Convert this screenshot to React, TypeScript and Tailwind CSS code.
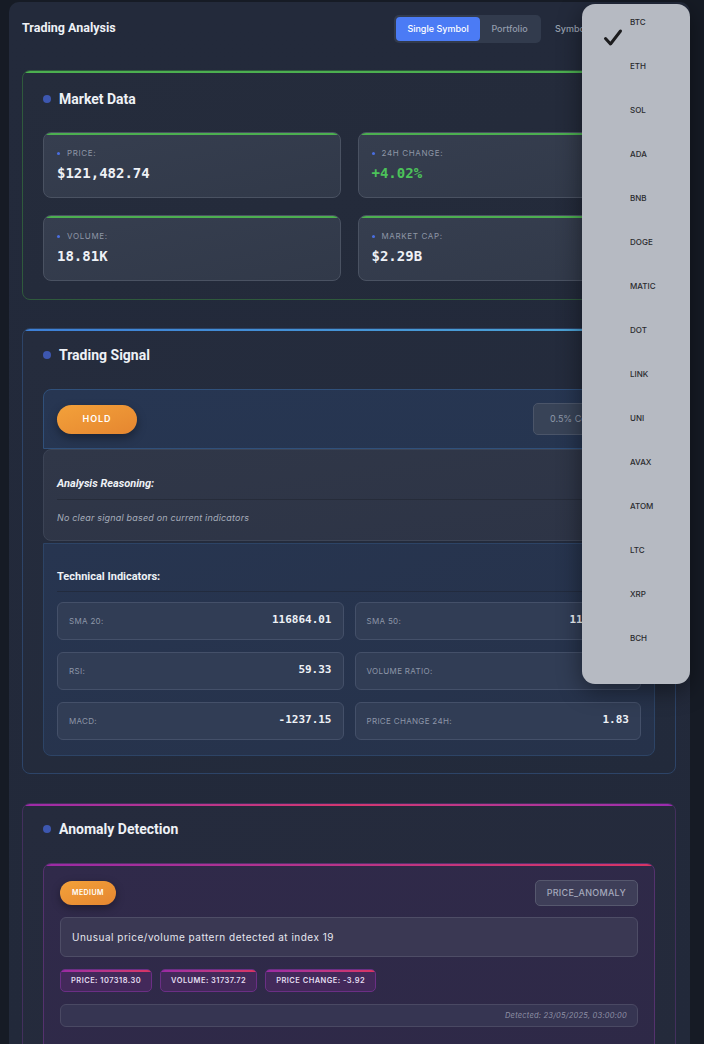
import React from 'react';

const symbols = ['BTC', 'ETH', 'SOL', 'ADA', 'BNB', 'DOGE', 'MATIC', 'DOT', 'LINK', 'UNI', 'AVAX', 'ATOM', 'LTC', 'XRP', 'BCH'];

const marketData = [
  { label: 'Price:', value: '$121,482.74', tone: 'text-[#eef1f6]' },
  { label: '24h Change:', value: '+4.02%', tone: 'text-[#4cc35a]' },
  { label: 'Volume:', value: '18.81K', tone: 'text-[#eef1f6]' },
  { label: 'Market Cap:', value: '$2.29B', tone: 'text-[#eef1f6]' },
];

const indicators = [
  { label: 'SMA 20:', value: '116864.01' },
  { label: 'SMA 50:', value: '114203.57' },
  { label: 'RSI:', value: '59.33' },
  { label: 'Volume Ratio:', value: '1.12' },
  { label: 'MACD:', value: '-1237.15' },
  { label: 'Price Change 24h:', value: '1.83' },
];

const chips = ['Price: 107318.30', 'Volume: 31737.72', 'Price Change: -3.92'];

const SectionTitle: React.FC<{ title: string }> = ({ title }) => (
  <div className="flex items-center gap-[8px] h-[16px]">
    <span className="w-[8px] h-[8px] rounded-full bg-[#3d57b0]" />
    <h3 className="font-['Roboto'] font-bold text-[14px] text-[#eef1f6]">{title}</h3>
  </div>
);

const StatCard: React.FC<{ label: string; value: string; tone: string }> = ({ label, value, tone }) => (
  <div className="relative overflow-hidden h-[66px] rounded-[8px] border border-[#4a5262] bg-gradient-to-br from-[#363e4f] to-[#313949] px-[13px] pt-[13px]">
    <div className="absolute top-0 left-0 right-0 h-[2px] bg-[#4caf50]" />
    <div className="flex items-center gap-[7px] h-[14px]">
      <span className="w-[3px] h-[3px] rounded-full bg-[#4a6ee0]" />
      <span className="font-['Inter'] text-[8px] uppercase tracking-[0.08em] text-[#8e96a6]">{label}</span>
    </div>
    <div className={`mt-[3px] font-['DejaVu_Sans_Mono'] font-bold text-[14px] ${tone}`}>{value}</div>
  </div>
);

export default function App() {
  return (
    <div className="relative w-[704px] h-[1044px] overflow-hidden bg-[#161b25] pt-[2px] pl-[9px]">
      <div className="w-[681px] h-[1060px] rounded-[10px] bg-gradient-to-b from-[#232a3b] to-[#22293a] pt-[13px] pl-[13px] pr-[14px]">
        {/* Header */}
        <div className="flex items-center justify-between h-[27px]">
          <h2 className="font-['Roboto'] font-bold text-[12.5px] text-[#eef1f6]">Trading Analysis</h2>
          <div className="flex items-center gap-[14px] pr-[12px]">
            <div className="flex rounded-[5px] bg-[#323b4d] p-[2px]">
              <button className="h-[24px] w-[84px] rounded-[4px] bg-[#4b7bf5] font-['Inter'] text-[9px] font-medium text-white">Single Symbol</button>
              <button className="h-[24px] w-[59px] font-['Inter'] text-[9px] font-medium text-[#939cac]">Portfolio</button>
            </div>
            <span className="font-['Inter'] text-[9px] font-medium text-[#9aa2b1]">Symbol:</span>
            <span className="w-[60px]" />
          </div>
        </div>

        {/* Market Data */}
        <section className="relative overflow-hidden mt-[28px] h-[230px] rounded-[8px] border border-[#2f5a3c] bg-gradient-to-br from-[#252c3c] to-[#232a3a] p-[20px]">
          <div className="absolute top-0 left-0 right-0 h-[2px] bg-[#4caf50]" />
          <SectionTitle title="Market Data" />
          <div className="mt-[25px] grid grid-cols-2 gap-[17px]">
            {marketData.map((m) => (
              <StatCard key={m.label} {...m} />
            ))}
          </div>
        </section>

        {/* Trading Signal */}
        <section className="relative overflow-hidden mt-[28px] h-[446px] rounded-[8px] border border-[#2d4468] bg-gradient-to-br from-[#252c3d] to-[#222a3b] px-[20px] pt-[18px]">
          <div className="absolute top-0 left-0 right-0 h-[2px] bg-gradient-to-r from-[#3d7fd6] to-[#4fa9d6]" />
          <SectionTitle title="Trading Signal" />
          <div className="mt-[26px] flex items-center justify-between h-[60px] rounded-t-[8px] border border-[#30507a] bg-gradient-to-br from-[#273652] to-[#263550] px-[13px]">
            <span className="flex items-center justify-center w-[80px] h-[29px] rounded-full bg-gradient-to-br from-[#f3a13a] to-[#e58630] shadow-[0_4px_10px_rgba(0,0,0,0.35)] font-['Inter'] text-[9px] font-semibold tracking-[0.1em] text-white">HOLD</span>
            <span className="flex items-center h-[32px] px-[16px] rounded-[5px] border border-[#4b5569] bg-[#384357] font-['Inter'] text-[9px] text-[#8f98a9]">0.5% Confidence</span>
          </div>
          <div className="h-[92px] rounded-[8px] border border-[#3c4456] bg-gradient-to-br from-[#303748] to-[#2d3446] px-[13px] pt-[26px]">
            <h4 className="font-['Roboto'] font-bold italic text-[11px] text-[#eef1f6] pb-[6px] border-b border-[#262c3a]">Analysis Reasoning:</h4>
            <p className="mt-[11px] font-['Inter'] italic text-[9px] tracking-[0.02em] text-[#a6adbb]">No clear signal based on current indicators</p>
          </div>
          <div className="mt-[2px] h-[213px] rounded-b-[8px] border border-[#2d4466] bg-gradient-to-br from-[#273550] to-[#26324a] px-[13px] pt-[25px]">
            <h4 className="font-['Roboto'] font-bold text-[11px] text-[#eef1f6] pb-[5px] border-b border-[#222b3e]">Technical Indicators:</h4>
            <div className="mt-[10px] grid grid-cols-2 gap-x-[11px] gap-y-[12px]">
              {indicators.map((i) => (
                <div key={i.label} className="flex items-center justify-between h-[38px] rounded-[6px] border border-[#445069] bg-[#313d55] px-[11px]">
                  <span className="font-['Inter'] text-[8px] uppercase tracking-[0.04em] text-[#8d96a8]">{i.label}</span>
                  <span className="font-['DejaVu_Sans_Mono'] font-bold text-[11px] text-[#eef1f6]">{i.value}</span>
                </div>
              ))}
            </div>
          </div>
        </section>

        {/* Anomaly Detection */}
        <section className="relative overflow-hidden mt-[29px] h-[260px] rounded-t-[8px] border border-[#43305d] bg-gradient-to-br from-[#252b3d] to-[#242a3b] px-[20px] pt-[17px]">
          <div className="absolute top-0 left-0 right-0 h-[2px] bg-gradient-to-r from-[#9d2aa8] via-[#d4376e] to-[#9a2bb0]" />
          <SectionTitle title="Anomaly Detection" />
          <div className="relative overflow-hidden mt-[26px] h-[200px] rounded-t-[8px] border border-[#55326e] bg-gradient-to-br from-[#302a4a] to-[#2e2947] px-[16px] pt-[16px]">
            <div className="absolute top-0 left-0 right-0 h-[2px] bg-gradient-to-r from-[#9b2aa4] to-[#d93463]" />
            <div className="flex items-center justify-between h-[26px]">
              <span className="flex items-center justify-center w-[56px] h-[24px] rounded-full bg-gradient-to-br from-[#f3a13a] to-[#e58630] shadow-[0_3px_8px_rgba(0,0,0,0.35)] font-['Inter'] text-[7px] font-semibold tracking-[0.06em] text-white">MEDIUM</span>
              <span className="flex items-center h-[26px] px-[11px] rounded-[5px] border border-[#56586e] bg-[#3e3e58] font-['Inter'] text-[9px] font-medium tracking-[0.03em] text-[#a4a8bb]">PRICE_ANOMALY</span>
            </div>
            <div className="mt-[11px] flex items-center h-[40px] rounded-[6px] border border-[#4e4d66] bg-[#3a3853] px-[11px] font-['Inter'] text-[10px] tracking-[0.05em] text-[#e6e7ef]">
              Unusual price/volume pattern detected at index 19
            </div>
            <div className="mt-[12px] flex gap-[8px]">
              {chips.map((c) => (
                <span key={c} className="relative overflow-hidden flex items-center h-[23px] px-[10px] rounded-[5px] border border-[#6b2f85] bg-[#43295a] font-['Inter'] text-[7.5px] font-semibold uppercase tracking-[0.06em] text-[#e2dcef]">
                  <span className="absolute top-0 left-0 right-0 h-[2px] bg-gradient-to-r from-[#9b2aa4] to-[#d93463]" />
                  {c}
                </span>
              ))}
            </div>
            <div className="mt-[12px] flex items-center justify-end h-[23px] rounded-[6px] border border-[#4a4963] bg-[#363552] px-[10px] font-['Inter'] italic text-[7.5px] tracking-[0.03em] text-[#8f91a6]">
              Detected: 23/05/2025, 03:00:00
            </div>
          </div>
        </section>
      </div>

      {/* Open symbol dropdown */}
      <div className="absolute left-[582px] top-[4px] w-[108px] h-[680px] rounded-[13px] bg-[#b6bac2] shadow-[0_6px_24px_rgba(0,0,0,0.45)]">
        <svg className="absolute left-[21px] top-[24px]" width="20" height="20" viewBox="0 0 20 20" fill="none">
          <path d="M2.5 10.5 L7.5 16 L17.5 3" stroke="#1c1c1e" strokeWidth="3" strokeLinecap="round" strokeLinejoin="round" />
        </svg>
        <ul className="pt-[12px] pl-[48px]">
          {symbols.map((s) => (
            <li key={s} className="h-[44px] font-['Inter'] text-[8px] font-medium text-[#2a2b2e]">{s}</li>
          ))}
        </ul>
      </div>
    </div>
  );
}
